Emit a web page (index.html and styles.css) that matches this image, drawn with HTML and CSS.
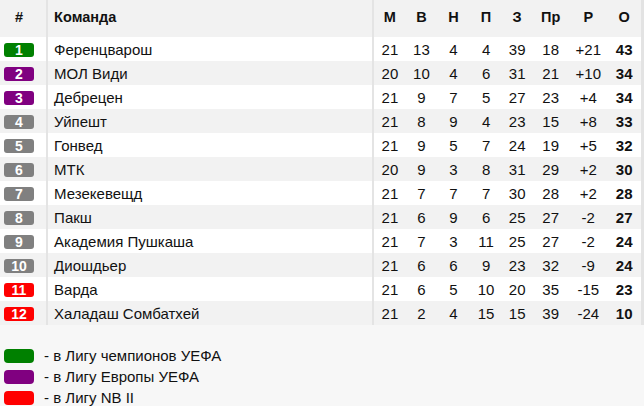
FILE: index.html
```html
<!DOCTYPE html>
<html lang="ru">
<head>
<meta charset="utf-8">
<link rel="stylesheet" href="styles.css">
</head>
<body>
<table class="standings">
  <colgroup>
    <col class="c-pos"><col class="c-team">
    <col class="c-m"><col class="c-w"><col class="c-d"><col class="c-l"><col class="c-gf"><col class="c-ga"><col class="c-gd"><col class="c-pts">
  </colgroup>
  <thead>
    <tr><th class="pos">#</th><th class="team">Команда</th><th class="first">М</th><th>В</th><th>Н</th><th>П</th><th>З</th><th>Пр</th><th>Р</th><th>О</th></tr>
  </thead>
  <tbody>
    <tr><td class="pos"><span class="badge green">1</span></td><td class="team">Ференцварош</td><td class="first">21</td><td>13</td><td>4</td><td>4</td><td>39</td><td>18</td><td>+21</td><td class="pts">43</td></tr>
    <tr><td class="pos"><span class="badge purple">2</span></td><td class="team">МОЛ Види</td><td class="first">20</td><td>10</td><td>4</td><td>6</td><td>31</td><td>21</td><td>+10</td><td class="pts">34</td></tr>
    <tr><td class="pos"><span class="badge purple">3</span></td><td class="team">Дебрецен</td><td class="first">21</td><td>9</td><td>7</td><td>5</td><td>27</td><td>23</td><td>+4</td><td class="pts">34</td></tr>
    <tr><td class="pos"><span class="badge gray">4</span></td><td class="team">Уйпешт</td><td class="first">21</td><td>8</td><td>9</td><td>4</td><td>23</td><td>15</td><td>+8</td><td class="pts">33</td></tr>
    <tr><td class="pos"><span class="badge gray">5</span></td><td class="team">Гонвед</td><td class="first">21</td><td>9</td><td>5</td><td>7</td><td>24</td><td>19</td><td>+5</td><td class="pts">32</td></tr>
    <tr><td class="pos"><span class="badge gray">6</span></td><td class="team">МТК</td><td class="first">20</td><td>9</td><td>3</td><td>8</td><td>31</td><td>29</td><td>+2</td><td class="pts">30</td></tr>
    <tr><td class="pos"><span class="badge gray">7</span></td><td class="team">Мезекевещд</td><td class="first">21</td><td>7</td><td>7</td><td>7</td><td>30</td><td>28</td><td>+2</td><td class="pts">28</td></tr>
    <tr><td class="pos"><span class="badge gray">8</span></td><td class="team">Пакш</td><td class="first">21</td><td>6</td><td>9</td><td>6</td><td>25</td><td>27</td><td>-2</td><td class="pts">27</td></tr>
    <tr><td class="pos"><span class="badge gray">9</span></td><td class="team">Академия Пушкаша</td><td class="first">21</td><td>7</td><td>3</td><td>11</td><td>25</td><td>27</td><td>-2</td><td class="pts">24</td></tr>
    <tr><td class="pos"><span class="badge gray">10</span></td><td class="team">Диошдьер</td><td class="first">21</td><td>6</td><td>6</td><td>9</td><td>23</td><td>32</td><td>-9</td><td class="pts">24</td></tr>
    <tr><td class="pos"><span class="badge red">11</span></td><td class="team">Варда</td><td class="first">21</td><td>6</td><td>5</td><td>10</td><td>20</td><td>35</td><td>-15</td><td class="pts">23</td></tr>
    <tr><td class="pos"><span class="badge red">12</span></td><td class="team">Халадаш Сомбатхей</td><td class="first">21</td><td>2</td><td>4</td><td>15</td><td>15</td><td>39</td><td>-24</td><td class="pts">10</td></tr>
  </tbody>
</table>
<ul class="legend">
  <li><span class="swatch green"></span>- в Лигу чемпионов УЕФА</li>
  <li><span class="swatch purple"></span>- в Лигу Европы УЕФА</li>
  <li><span class="swatch red"></span>- в Лигу NB II</li>
</ul>
</body>
</html>
```

FILE: styles.css
```css
html, body {
  margin: 0;
  padding: 0;
}
body {
  background: #f7f7f7;
  font-family: "Liberation Sans", Arial, sans-serif;
  font-size: 15px;
  color: #111;
}
.standings {
  width: 644px;
  border-collapse: collapse;
  table-layout: fixed;
  border-right: 3px solid #e3e3e3;
}
.c-pos { width: 47px; }
.c-team { width: 325px; }
.c-m { width: 33px; }
.c-w { width: 31px; }
.c-d { width: 33px; }
.c-l { width: 32px; }
.c-gf { width: 30px; }
.c-ga { width: 37px; }
.c-gd { width: 38px; }
.c-pts { width: 35px; }

.standings th,
.standings td {
  padding: 0;
  text-align: center;
  white-space: nowrap;
}
.standings thead tr {
  background: #f2f2f2;
  height: 37px;
}
.standings th {
  font-weight: bold;
  font-size: 14.5px;
  vertical-align: middle;
  padding-bottom: 4px;
}
.standings tbody tr {
  height: 24px;
}
.standings td {
  padding-top: 1px;
}
.standings tbody tr:nth-child(odd) {
  background: #fff;
}
.standings tbody tr:nth-child(even) {
  background: #f2f2f2;
}
.standings .pos {
  text-align: left;
  padding-left: 4px;
  border-right: 2px solid #e4e4e4;
}
.standings th.pos {
  text-indent: 11px;
}
.standings .team {
  text-align: left;
  padding-left: 6px;
  border-right: 2px solid #e4e4e4;
}
.standings .pts {
  font-weight: bold;
}
.badge {
  display: inline-block;
  width: 30px;
  height: 14px;
  line-height: 14px;
  border-radius: 3px;
  color: #fff;
  font-weight: bold;
  font-size: 14px;
  text-align: center;
  vertical-align: middle;
  position: relative;
  top: -1px;
}
.green { background: #008000; }
.purple { background: #800080; }
.gray { background: #808080; }
.red { background: #ff0000; }

.legend {
  list-style: none;
  margin: 0;
  padding: 20px 0 0 4px;
}
.legend li {
  display: flex;
  align-items: center;
  height: 21px;
  font-size: 15px;
}
.swatch {
  display: inline-block;
  width: 30px;
  height: 14px;
  border-radius: 4px;
  margin-right: 10px;
}
```
